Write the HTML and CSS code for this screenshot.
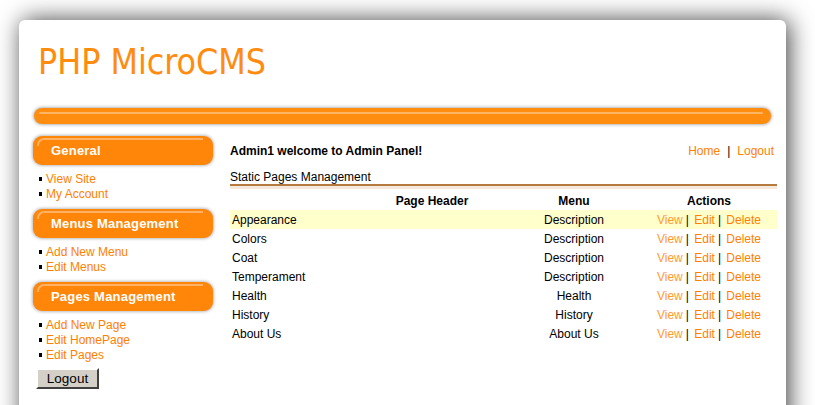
FILE: index.html
```html
<!DOCTYPE html>
<html lang="en">
<head>
  <meta charset="UTF-8" />
  <meta name="viewport" content="width=device-width, initial-scale=1.0"/>
  <title>PHP MicroCMS - Admin Panel</title>
  <link rel="stylesheet" href="styles.css">
</head>
<body>
  <div class="page">
    <div class="header">
      <h1>PHP MicroCMS</h1>
    </div>
    <div class="bar"></div>

    <div class="layout">
      <div class="sidebar">
        <div class="side-title">General</div>
        <ul class="side-links">
          <li><a href="#">View Site</a></li>
          <li><a href="#">My Account</a></li>
        </ul>

        <div class="side-title">Menus Management</div>
        <ul class="side-links">
          <li><a href="#">Add New Menu</a></li>
          <li><a href="#">Edit Menus</a></li>
        </ul>

        <div class="side-title">Pages Management</div>
        <ul class="side-links">
          <li><a href="#">Add New Page</a></li>
          <li><a href="#">Edit HomePage</a></li>
          <li><a href="#">Edit Pages</a></li>
        </ul>

        <button class="btn-logout">Logout</button>
      </div>

      <div class="content">
        <div class="welcome">
          <b>Admin1 welcome to Admin Panel!</b>
          <span class="top-links"><a href="#">Home</a><span class="sep">|</span><a href="#">Logout</a></span>
        </div>

        <div class="section-title">Static Pages Management</div>

        <table class="pages">
          <tr>
            <th class="col-title"></th>
            <th class="col-header">Page Header</th>
            <th class="col-menu">Menu</th>
            <th class="col-actions">Actions</th>
          </tr>
          <tr class="hl">
            <td>Appearance</td>
            <td></td>
            <td class="center">Description</td>
            <td class="actions"><a class="view" href="#">View</a>| <a href="#">Edit</a>| <a href="#">Delete</a></td>
          </tr>
          <tr>
            <td>Colors</td>
            <td></td>
            <td class="center">Description</td>
            <td class="actions"><a class="view" href="#">View</a>| <a href="#">Edit</a>| <a href="#">Delete</a></td>
          </tr>
          <tr>
            <td>Coat</td>
            <td></td>
            <td class="center">Description</td>
            <td class="actions"><a class="view" href="#">View</a>| <a href="#">Edit</a>| <a href="#">Delete</a></td>
          </tr>
          <tr>
            <td>Temperament</td>
            <td></td>
            <td class="center">Description</td>
            <td class="actions"><a class="view" href="#">View</a>| <a href="#">Edit</a>| <a href="#">Delete</a></td>
          </tr>
          <tr>
            <td>Health</td>
            <td></td>
            <td class="center">Health</td>
            <td class="actions"><a class="view" href="#">View</a>| <a href="#">Edit</a>| <a href="#">Delete</a></td>
          </tr>
          <tr>
            <td>History</td>
            <td></td>
            <td class="center">History</td>
            <td class="actions"><a class="view" href="#">View</a>| <a href="#">Edit</a>| <a href="#">Delete</a></td>
          </tr>
          <tr>
            <td>About Us</td>
            <td></td>
            <td class="center">About Us</td>
            <td class="actions"><a class="view" href="#">View</a>| <a href="#">Edit</a>| <a href="#">Delete</a></td>
          </tr>
        </table>
      </div>
    </div>
  </div>
</body>
</html>
```

FILE: styles.css
```css
* {
  margin: 0;
  padding: 0;
  box-sizing: border-box;
}

body {
  background: #ffffff;
  font-family: "Liberation Sans", Arial, sans-serif;
  font-size: 12px;
  color: #000;
  padding: 20px 0 0 19px;
  overflow: hidden;
}

a {
  color: #ff8000;
  text-decoration: none;
}

.page {
  width: 767px;
  min-height: 420px;
  background: #fff;
  border-radius: 6px;
  box-shadow: 3px 0 24px rgba(0, 0, 0, 0.75);
}

.header {
  height: 88px;
  padding: 22px 0 0 19px;
}

.header h1 {
  font-family: "DejaVu Sans Condensed", "DejaVu Sans", sans-serif;
  font-stretch: condensed;
  font-weight: normal;
  font-size: 35.4px;
  line-height: 40px;
  color: #ff8c0f;
}

.bar {
  position: relative;
  height: 16px;
  margin: 0 15px;
  border-radius: 8px;
  background: #ff8e10;
  box-shadow: 0 0 3px 1px rgba(90, 90, 90, 0.45);
}

.bar::after {
  content: "";
  position: absolute;
  top: 4px;
  left: 5px;
  right: 8px;
  height: 2px;
  border-radius: 2px;
  background: #ffb561;
}

.layout {
  display: flex;
  padding: 12px 0 0 14px;
}

.sidebar {
  width: 180px;
  flex-shrink: 0;
}

.side-title {
  position: relative;
  height: 29px;
  border-radius: 9px;
  background: #ff8609;
  box-shadow: 0 0 3px 1px rgba(90, 90, 90, 0.4);
  color: #fff;
  font-weight: bold;
  font-size: 13px;
  letter-spacing: 0.2px;
  line-height: 29px;
  padding-left: 18px;
}

.side-title::before {
  content: "";
  position: absolute;
  top: 2px;
  left: 4px;
  right: 10px;
  height: 6px;
  border-top: 2px solid #ffb265;
  border-left: 2px solid #ffb265;
  border-top-left-radius: 7px;
}

.side-links {
  list-style: none;
  margin: 7px 0 7px 6px;
  line-height: 15px;
}

.side-links li::before {
  content: "";
  display: inline-block;
  width: 3px;
  height: 4px;
  background: #000;
  margin: 0 4px 1px 0;
  vertical-align: middle;
}

.btn-logout {
  width: 63px;
  height: 21px;
  margin: -2px 0 0 3px;
  background: #d4d0c8;
  border: 2px solid;
  border-color: #fff #404040 #404040 #fff;
  font-family: "Liberation Sans", Arial, sans-serif;
  font-size: 13.5px;
  color: #000;
}

.content {
  width: 547px;
  margin-left: 17px;
  padding-top: 7px;
}

.welcome {
  display: flex;
  justify-content: space-between;
  line-height: 16px;
  padding-right: 3px;
}

.sep {
  margin: 0 7px;
  color: #000;
}

.section-title {
  margin-top: 11px;
  line-height: 14px;
  border-bottom: 2px solid #b47a3e;
  box-shadow: 0 3px 0 #f5e9de;
}

.pages {
  width: 547px;
  margin-top: 5px;
  border-collapse: collapse;
}

.pages th,
.pages td {
  height: 19px;
  padding: 0 2px;
  font-size: 12px;
}

.pages th {
  font-weight: bold;
  text-align: center;
}

.col-title {
  width: 127px;
}

.col-header {
  width: 150px;
}

.col-menu {
  width: 134px;
}

.col-actions {
  width: 136px;
}

.pages .center {
  text-align: center;
}

.pages .actions {
  text-align: center;
  word-spacing: 2px;
}

.pages tr.hl td {
  background: #ffffcc;
}

.pages a.view {
  color: #ff9a33;
  margin-right: 3px;
}

.pages a.view ~ a {
  margin-right: 3px;
}

.pages a.view ~ a:last-child {
  margin-right: 0;
}
```
